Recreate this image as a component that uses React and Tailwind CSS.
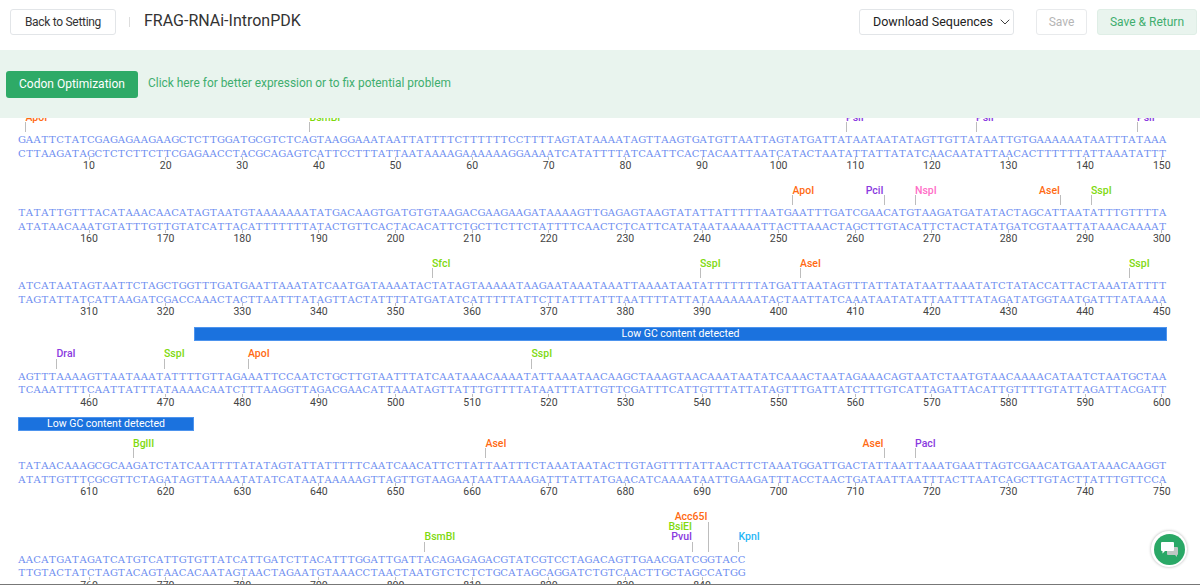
import React from 'react';
import { ChevronDown } from 'lucide-react';

const ORANGE = '#ff6a13';
const GREEN = '#7ed90f';
const PURPLE = '#8a3ae0';
const PINK = '#ff6ec7';
const BLUE = '#29b6f6';

const blocks = [
    {
        canvas: 'h-[15px]',
        start: 10,
        seq: 'GAATTCTATCGAGAGAAGAAGCTCTTGGATGCGTCTCAGTAAGGAAATAATTATTTTCTTTTTTCCTTTTAGTATAAAATAGTTAAGTGATGTTAATTAGTATGATTATAATAATATAGTTGTTATAATTGTGAAAAAATAATTTATAAA',
        sites: [
            { name: 'ApoI', x: 25, color: ORANGE },
            { name: 'BsmBI', x: 309, color: GREEN },
            { name: 'PsiI', x: 845.5, color: PURPLE },
            { name: 'PsiI', x: 975.5, color: PURPLE },
            { name: 'PsiI', x: 1136.5, color: PURPLE },
        ],
    },
    {
        canvas: 'h-[33px]',
        start: 160,
        seq: 'TATATTGTTTACATAAACAACATAGTAATGTAAAAAAATATGACAAGTGATGTGTAAGACGAAGAAGATAAAAGTTGAGAGTAAGTATATTATTTTTAATGAATTTGATCGAACATGTAAGATGATATACTAGCATTAATATTTGTTTTA',
        sites: [
            { name: 'ApoI', x: 792, color: ORANGE },
            { name: 'PciI', x: 883.5, color: PURPLE, left: true },
            { name: 'NspI', x: 914.5, color: PINK },
            { name: 'AseI', x: 1060, color: ORANGE, left: true },
            { name: 'SspI', x: 1090.5, color: GREEN },
        ],
    },
    {
        canvas: 'h-[33px]',
        start: 310,
        seq: 'ATCATAATAGTAATTCTAGCTGGTTTGATGAATTAAATATCAATGATAAAATACTATAGTAAAAATAAGAATAAATAAATTAAAATAATATTTTTTTATGATTAATAGTTTATTATATAATTAAATATCTATACCATTACTAAATATTTT',
        sites: [
            { name: 'SfcI', x: 431.5, color: GREEN },
            { name: 'SspI', x: 699.5, color: GREEN },
            { name: 'AseI', x: 799.5, color: ORANGE },
            { name: 'SspI', x: 1128.5, color: GREEN },
        ],
    },
    {
        canvas: 'h-[28.5px]',
        bar: { className: 'ml-[176px] w-[973px]', gap: 'mt-[8px]' },
        start: 460,
        seq: 'AGTTTAAAAGTTAATAAATATTTTGTTAGAAATTCCAATCTGCTTGTAATTTATCAATAAACAAAATATTAAATAACAAGCTAAAGTAACAAATAATATCAAACTAATAGAAACAGTAATCTAATGTAACAAAACATAATCTAATGCTAA',
        sites: [
            { name: 'DraI', x: 56, color: PURPLE },
            { name: 'SspI', x: 163.5, color: GREEN },
            { name: 'ApoI', x: 247.5, color: ORANGE },
            { name: 'SspI', x: 531, color: GREEN },
        ],
    },
    {
        canvas: 'h-[28px]',
        bar: { className: 'w-[176px]', gap: 'mt-[7.5px]' },
        start: 610,
        seq: 'TATAACAAAGCGCAAGATCTATCAATTTTATATAGTATTATTTTTCAATCAACATTCTTATTAATTTCTAAATAATACTTGTAGTTTTATTAACTTCTAAATGGATTGACTATTAATTAAATGAATTAGTCGAACATGAATAAACAAGGT',
        sites: [
            { name: 'BglII', x: 132.5, color: GREEN },
            { name: 'AseI', x: 485, color: ORANGE },
            { name: 'AseI', x: 883.5, color: ORANGE, left: true },
            { name: 'PacI', x: 914.5, color: PURPLE },
        ],
    },
    {
        canvas: 'h-[53.5px]',
        start: 760,
        seq: 'AACATGATAGATCATGTCATTGTGTTATCATTGATCTTACATTTGGATTGATTACAGAGAGACGTATCGTCCTAGACAGTTGAACGATCGGTACC',
        sites: [
            { name: 'BsmBI', x: 424, color: GREEN },
            { name: 'Acc65I', x: 707.5, color: ORANGE, left: true, rise: 20 },
            { name: 'BsiEI', x: 692, color: GREEN, left: true, rise: 10, noTick: true },
            { name: 'PvuI', x: 692, color: PURPLE, left: true },
            { name: 'KpnI', x: 738, color: BLUE },
        ],
    },
];

const complement = (seq) =>
    seq.replace(/[ACGT]/g, (c) => ({ A: 'T', T: 'A', G: 'C', C: 'G' })[c]);

const Site = ({ site }) => {
    const { name, x, color, left, rise = 0, noTick } = site;
    return (
        <>
            {!noTick && (
                <div
                    className="absolute bottom-[1px] w-px bg-[#bdbdbd]"
                    style={{ left: x - 18, height: 10 + rise }}
                />
            )}
            <div
                className="absolute text-[10.5px] leading-[12px] font-medium whitespace-nowrap"
                style={{
                    color,
                    bottom: 9.5 + rise,
                    ...(left ? { right: 1200 - x } : { left: x - 17.5 }),
                }}
            >
                {name}
            </div>
        </>
    );
};

const Ruler = ({ start, count }) => (
    <div className="flex h-[13px]">
        {Array.from({ length: count }, (_, i) => (
            <div key={i} className="w-[76.64px] shrink-0 flex justify-end">
                <div className="w-8 -mr-[10.4px] flex flex-col items-center">
                    <div className="w-px h-[3px] -mt-[3px] bg-[#bdbdbd]" />
                    <div className="text-[10.5px] leading-[11px] text-[#444]">{start + i * 10}</div>
                </div>
            </div>
        ))}
    </div>
);

// every base sits in its own cell, the serif letters aren't monospaced
const Strand = ({ seq }) => (
    <div className="flex h-[13.5px] items-center">
        {seq.split('').map((c, i) => (
            <span key={i} className="w-[7.664px] shrink-0 text-center">{c}</span>
        ))}
    </div>
);

const SeqBlock = ({ block }) => (
    <div className="ml-[18px]">
        {block.bar && (
            <div className={`${block.bar.gap} ${block.bar.className} h-[14px] bg-[#1b72de] border border-[#4d94ee] text-white text-[10.5px] leading-[12px] text-center`}>
                Low GC content detected
            </div>
        )}
        <div className={`relative ${block.canvas}`}>
            {block.sites.map((site) => (
                <Site key={site.name + site.x} site={site} />
            ))}
        </div>
        <div className="font-['DejaVu_Serif',serif] text-[10px] leading-[13.5px] text-[#6c8cf0]">
            <Strand seq={block.seq} />
            <Strand seq={complement(block.seq)} />
        </div>
        <Ruler start={block.start} count={Math.floor(block.seq.length / 10)} />
    </div>
);

const App = () => {
    return (
        <div className="relative h-[585px] w-[1200px] flex flex-col overflow-hidden bg-white font-['Roboto',sans-serif]">
            <div className="h-[50px] shrink-0 flex items-start pt-[9px] pl-[10px] pr-[3px]">
                <button className="h-[26px] w-[106px] rounded-[3px] border border-[#e2e5e8] text-[12px] tracking-[-0.3px] text-[#333]">Back to Setting</button>
                <div className="w-px h-[10px] bg-[#ddd] ml-[13px] mt-[8px]" />
                <div className="ml-[14px] -mt-[1px] text-[16px] leading-[26px] text-[#333]">FRAG-RNAi-IntronPDK</div>
                <button className="ml-auto h-[26px] w-[155px] rounded-[3px] border border-[#e2e5e8] text-[12.5px] text-[#222] flex items-center pl-[13px] gap-[4px] whitespace-nowrap">
                    Download Sequences <ChevronDown size={16} strokeWidth={1.3} />
                </button>
                <button className="ml-[22px] h-[26px] w-[51px] rounded-[3px] border border-[#e8eaec] text-[12px] text-[#b5b5b5]">Save</button>
                <button className="ml-[10px] h-[26px] w-[100px] rounded-[3px] border border-[#dfeee6] bg-[#e9f4ee] text-[12px] text-[#3fae6f]">Save &amp; Return</button>
            </div>
            <div className="h-[68px] shrink-0 bg-[#e9f4ee] flex items-center pl-[6px]">
                <button className="h-[27px] w-[132px] rounded-[3px] bg-[#2eaa67] text-white text-[12px]">Codon Optimization</button>
                <div className="ml-[10px] text-[11.9px] text-[#3fae6f] -mt-[1px]">Click here for better expression or to fix potential problem</div>
            </div>
            <div className="flex-1 overflow-hidden">
                {blocks.map((block) => (
                    <SeqBlock key={block.start} block={block} />
                ))}
            </div>
            <div className="h-px shrink-0 bg-[#777]" />
            <div className="absolute left-[1151px] top-[531px] w-[36px] h-[36px] rounded-full bg-white shadow-[0_0_3px_rgba(0,0,0,0.3)] flex items-center justify-center">
                <div className="w-[31px] h-[31px] rounded-full bg-[#2aa866] flex items-center justify-center">
                    <svg width="17" height="15" viewBox="0 0 17 15">
                        <path d="M6 5h10a1 1 0 0 1 1 1v6a1 1 0 0 1-1 1v2l-2-2H7a1 1 0 0 1-1-1z" fill="#bfc7c3" />
                        <path d="M1 0h11a1 1 0 0 1 1 1v7a1 1 0 0 1-1 1H4l-2.500 2.500V9H1a1 1 0 0 1-1-1V1a1 1 0 0 1 1-1z" fill="#fff" />
                    </svg>
                </div>
            </div>
        </div>
    );
};

export default App;
